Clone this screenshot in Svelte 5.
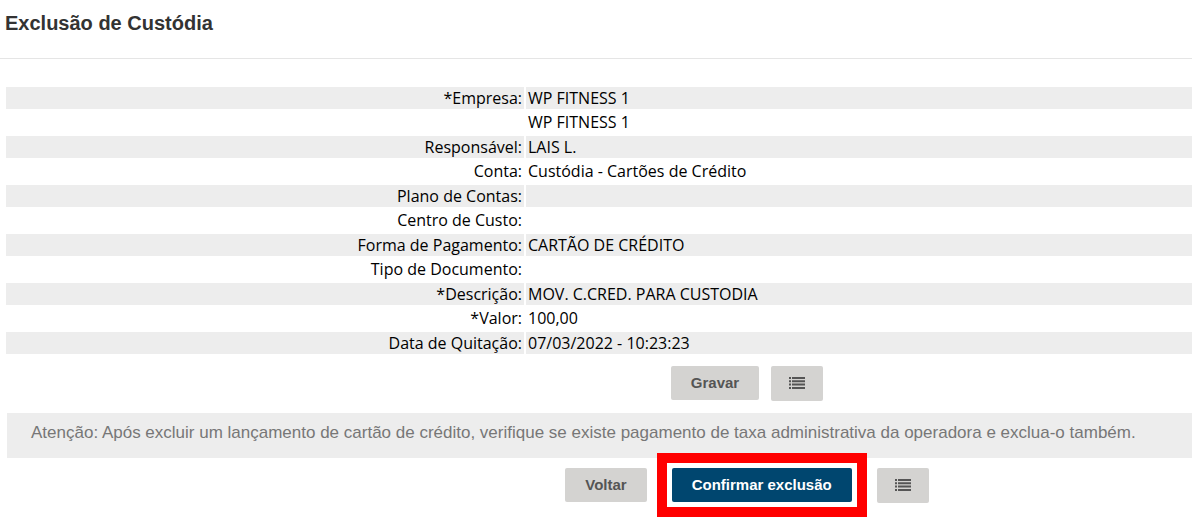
<script lang="ts">
	interface Field {
		label: string;
		value: string;
	}

	const fields: Field[] = [
		{ label: '*Empresa:', value: 'WP FITNESS 1' },
		{ label: '', value: 'WP FITNESS 1' },
		{ label: 'Responsável:', value: 'LAIS L.' },
		{ label: 'Conta:', value: 'Custódia - Cartões de Crédito' },
		{ label: 'Plano de Contas:', value: '' },
		{ label: 'Centro de Custo:', value: '' },
		{ label: 'Forma de Pagamento:', value: 'CARTÃO DE CRÉDITO' },
		{ label: 'Tipo de Documento:', value: '' },
		{ label: '*Descrição:', value: 'MOV. C.CRED. PARA CUSTODIA' },
		{ label: '*Valor:', value: '100,00' },
		{ label: 'Data de Quitação:', value: '07/03/2022 - 10:23:23' }
	];
</script>

{#snippet listIcon()}
	<svg width="16" height="12" viewBox="0 0 16 12" aria-hidden="true">
		<path d="M0 0h2v2H0zM0 3.3h2v2H0zM0 6.6h2v2H0zM0 10h2v2H0zM3 0h13v2H3zM3 3.3h13v2H3zM3 6.6h13v2H3zM3 10h13v2H3z" />
	</svg>
{/snippet}

<main>
	<header>
		<h1>Exclusão de Custódia</h1>
	</header>

	<table>
		<tbody>
			{#each fields as field}
				<tr>
					<th scope="row">{field.label}</th>
					<td>{field.value}</td>
				</tr>
			{/each}
		</tbody>
	</table>

	<div class="actions">
		<button type="button">Gravar</button>
		<button type="button" class="icon" aria-label="Listar">{@render listIcon()}</button>
	</div>

	<p class="notice">
		Atenção: Após excluir um lançamento de cartão de crédito, verifique se existe pagamento de taxa administrativa da operadora e exclua-o também.
	</p>

	<div class="actions confirm">
		<button type="button">Voltar</button>
		<div class="highlight">
			<button type="button" class="primary">Confirmar exclusão</button>
		</div>
		<button type="button" class="icon" aria-label="Listar">{@render listIcon()}</button>
	</div>
</main>

<style>
	:global(body) {
		background: #fff;
	}
	main {
		overflow: hidden;
		padding-bottom: 17px;
		font-family: 'Liberation Sans', Arial, sans-serif;
	}
	header {
		padding: 11px 5px 23px;
		border-bottom: 1px solid #e5e5e5;
	}
	h1 {
		margin: 0;
		font-size: 20px;
		line-height: 24px;
		color: #333;
	}
	table {
		width: calc(100% - 2px);
		margin: 26px 0 0 4px;
		border-spacing: 2px;
		table-layout: fixed;
		font-family: 'Trebuchet MS', 'Open Sans', sans-serif;
		font-size: 16px;
		line-height: 22px;
		color: #000;
	}
	th, td {
		height: 22px;
		padding: 0 2px;
		text-align: left;
		vertical-align: top;
		font-weight: 400;
		white-space: nowrap;
	}
	th {
		width: 43.75%;
		box-sizing: border-box;
		text-align: right;
	}
	tr:nth-child(odd) > * {
		background: #ededed;
	}
	tr:nth-child(even) > * {
		height: 23px;
	}
	.actions {
		display: flex;
		justify-content: center;
		align-items: flex-start;
		gap: 12px;
		padding: 10px 0 12px 302px;
	}
	.confirm {
		gap: 25px;
		padding-bottom: 0;
	}
	button {
		display: block;
		height: 34px;
		padding: 0 20px;
		border: 0;
		border-radius: 2px;
		background: #d4d3d1;
		color: #555;
		font-family: inherit;
		font-size: 15px;
		font-weight: 700;
		line-height: 34px;
	}
	.icon {
		display: flex;
		align-items: center;
		height: 35px;
		padding: 0 18px 1px;
	}
	.icon svg {
		fill: #555;
	}
	/* the frame overlaps the spacing around the button */
	.highlight {
		margin: -15px;
		padding: 5px;
		border: 10px solid #f00;
	}
	.primary {
		background: #00466f;
		color: #fff;
	}
	.notice {
		margin: 0 0 0 7px;
		padding: 8px 24px 13px;
		background: #ededed;
		color: #777;
		font-size: 17px;
		line-height: 24px;
		white-space: nowrap;
	}
</style>
